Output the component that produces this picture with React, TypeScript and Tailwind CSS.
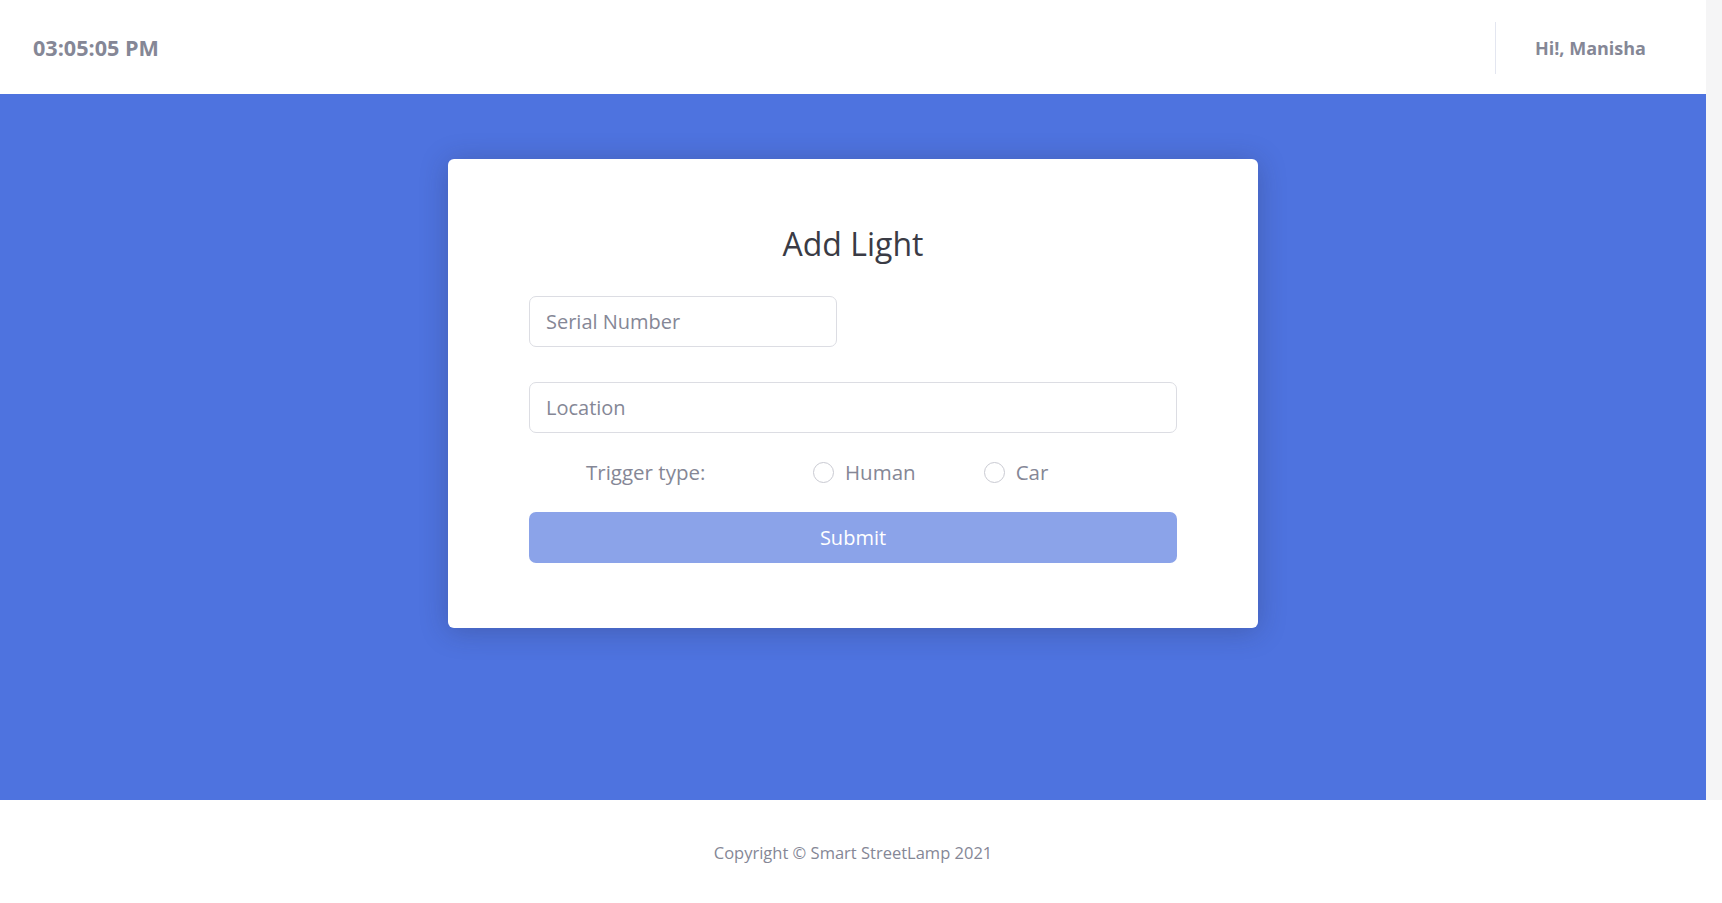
import React from "react";

export default function App() {
  const font = { fontFamily: '"Open Sans", "Noto Sans", sans-serif' };
  return (
    <div className="w-[1722px] h-[903px] bg-white overflow-hidden" style={font}>
      <div className="flex">
        <div className="flex flex-col w-[1706px]">
          <header className="h-[94px] bg-white flex items-center justify-between pl-[33px] pr-[60px] pt-[2px]">
            <div className="text-[21.6px] font-bold text-[#858796] leading-none">03:05:05 PM</div>
            <div className="flex items-center h-full">
              <div className="w-px h-[52px] bg-[#e3e6f0]" />
              <div className="ml-[39px] text-[18px] font-bold text-[#858796] leading-none">Hi!, Manisha</div>
            </div>
          </header>
          <main className="h-[706px] bg-[#4e73df] flex justify-center pt-[65px]">
            <div className="w-[810px] h-[469px] bg-white rounded-[6px] shadow-[0_3px_28px_0_rgba(40,40,60,0.28)] px-[81px] pt-[65px]">
              <h1 className="text-center text-[32px] leading-[40px] text-[#3a3b45] font-normal">Add Light</h1>
              <div className="mt-[32px] w-[308px] h-[51px] border border-[#dcdde3] rounded-[7px] flex items-center px-[16px] text-[20px] text-[#858796]">
                Serial Number
              </div>
              <div className="mt-[35px] w-full h-[51px] border border-[#dcdde3] rounded-[7px] flex items-center px-[16px] text-[20px] text-[#858796]">
                Location
              </div>
              <div className="mt-[19px] h-[40px] flex items-center pl-[57px] text-[20.5px] text-[#858796]">
                <div className="w-[227px]">Trigger type:</div>
                <div className="flex items-center">
                  <span className="w-[21px] h-[21px] rounded-full border border-[#c9cad2] bg-white" />
                  <span className="ml-[11px]">Human</span>
                </div>
                <div className="flex items-center ml-[68px]">
                  <span className="w-[21px] h-[21px] rounded-full border border-[#c9cad2] bg-white" />
                  <span className="ml-[11px]">Car</span>
                </div>
              </div>
              <button className="mt-[20px] w-full h-[51px] rounded-[7px] bg-[#8ba3e9] text-white text-[20px] flex items-center justify-center">
                Submit
              </button>
            </div>
          </main>
        </div>
        <div className="w-[16px] bg-[#f5f5f6]" />
      </div>
      <footer className="h-[103px] flex items-center justify-center pr-[16px] pt-[4px]">
        <span className="text-[16.5px] text-[#858796]">Copyright © Smart StreetLamp 2021</span>
      </footer>
    </div>
  );
}
